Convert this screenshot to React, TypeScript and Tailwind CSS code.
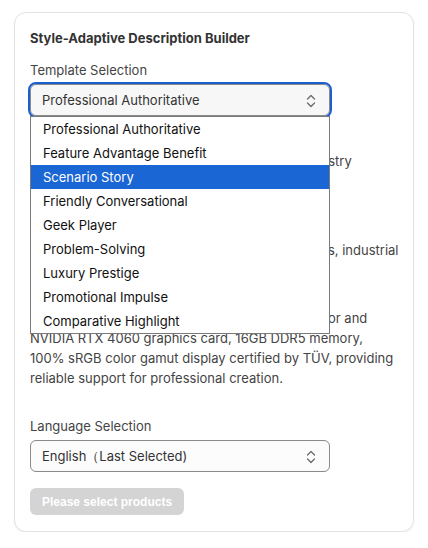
import { useState } from "react";

const templates = [
  "Professional Authoritative",
  "Feature Advantage Benefit",
  "Scenario Story",
  "Friendly Conversational",
  "Geek Player",
  "Problem-Solving",
  "Luxury Prestige",
  "Promotional Impulse",
  "Comparative Highlight",
];

function UpDown() {
  return (
    <svg width="10" height="14" viewBox="0 0 10 14" fill="none" stroke="#6b6b6b" strokeWidth="1.3" strokeLinecap="round" strokeLinejoin="round">
      <path d="M1.5 5 L5 1.5 L8.5 5" />
      <path d="M1.5 9 L5 12.5 L8.5 9" />
    </svg>
  );
}

export default function App() {
  const [hover] = useState(2);

  return (
    <div className="pl-[14px] pt-[12px] font-['Inter',sans-serif]">
      <div className="w-[400px] rounded-xl border border-[#e2e2e2] bg-white px-[15px] pt-[15px] pb-[16px] shadow-[0_1px_2px_rgba(0,0,0,0.06)]">
        <h2 className="text-[13px] font-bold leading-5 text-[#333]">Style-Adaptive Description Builder</h2>

        <div className="relative mt-3">
          <div className="text-[13px] leading-5 text-[#444]">Template Selection</div>
          <div className="mt-1 flex h-8 w-[300px] items-center justify-between rounded-md border border-[#8a8a8a] bg-[#f7f7f7] pl-[11px] pr-[13px] pt-px text-[13px] text-[#333] outline-2 outline-offset-0 outline-[#1a5fd0]">
            <span>Professional Authoritative</span>
            <UpDown />
          </div>

          <div className="absolute left-0 top-[56px] z-10 w-[300px] border border-[#7a7a7a] bg-white">
            {templates.map((t, i) => (
              <div
                key={t}
                className={
                  i === hover
                    ? "flex h-6 items-center bg-[#1a66d4] pl-3 pt-px text-[13px] text-white"
                    : "flex h-6 items-center pl-3 pt-px text-[13px] text-[#111]"
                }
              >
                {t}
              </div>
            ))}
          </div>

          <p className="mt-[15px] whitespace-nowrap text-[13px] leading-5 text-[#444]">
            Description: Uses precise terminology and
            <br />
            data and expert endorsement to win trust in industry
            <br />
            credibility and highlight technical strength. Tone:
          </p>
          <p className="mt-[29px] whitespace-nowrap text-[13px] leading-5 text-[#444]">
            Applicable Scenarios:
            <br />
            Laptops, professional workstations, B2B products, industrial
            <br />
            machinery and high-end electronics.
          </p>
          <p className="mt-2 whitespace-nowrap text-[13px] leading-5 text-[#444]">
            Example:
            <br />
            Equipped with the 13th Gen Intel Core i7 processor and
            <br />
            NVIDIA RTX 4060 graphics card, 16GB DDR5 memory,
            <br />
            100% sRGB color gamut display certified by TÜV, providing
            <br />
            reliable support for professional creation.
          </p>
        </div>

        <div className="mt-7 text-[13px] leading-5 text-[#444]">Language Selection</div>
        <div className="mt-1 flex h-8 w-[300px] items-center justify-between rounded-md border border-[#8a8a8a] bg-[#fcfcfc] pl-[11px] pr-[13px] pt-px text-[13px] text-[#333]">
          <span>English（Last Selected)</span>
          <UpDown />
        </div>

        <button className="mt-4 h-[27px] rounded-md bg-[#d4d4d4] px-3 font-['Liberation_Sans',Arial,sans-serif] text-xs font-bold text-white">
          Please select products
        </button>
      </div>
    </div>
  );
}
